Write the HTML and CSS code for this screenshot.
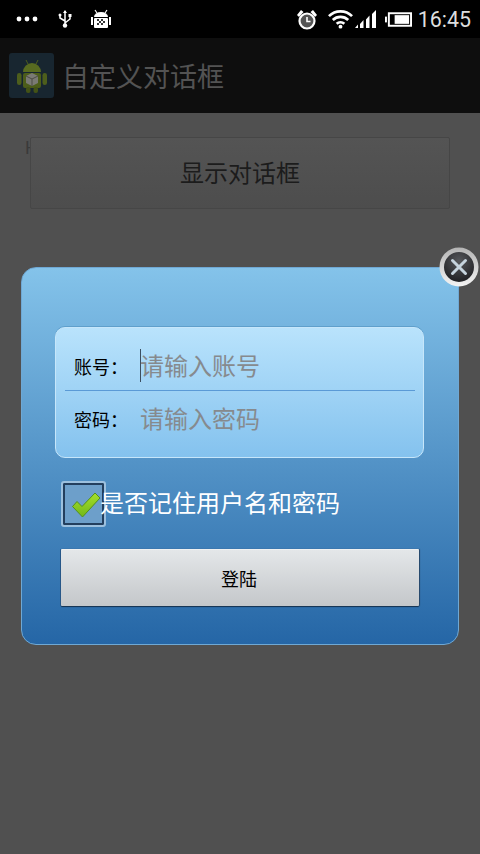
FILE: index.html
```html
<!DOCTYPE html>
<html lang="zh">
<head>
<meta charset="utf-8">
<title>自定义对话框</title>
<link rel="stylesheet" href="styles.css">
</head>
<body>
<div class="screen">
  <header class="status">
    <div class="status-left">
      <svg class="ic-dots" width="22" height="6" viewBox="0 0 22 6"><circle cx="3" cy="3" r="2.4" fill="#fff"/><circle cx="11" cy="3" r="2.4" fill="#fff"/><circle cx="19" cy="3" r="2.4" fill="#fff"/></svg>
      <svg class="ic-usb" width="16" height="18" viewBox="0 0 16 18"><path d="M8 1v15M8 11 3 8V5M8 13l5-4V6" fill="none" stroke="#fff" stroke-width="1.5"/><path d="M8 0l2 3H6z" fill="#fff"/><circle cx="8" cy="15.5" r="2.2" fill="#fff"/><circle cx="3" cy="5" r="1.5" fill="#fff"/><rect x="11.5" y="4" width="3" height="3" fill="#fff"/></svg>
      <svg class="ic-debug" width="20" height="21" viewBox="0 0 20 21"><path d="M4 1l2 3M16 1l-2 3" stroke="#fff" stroke-width="1.2"/><path d="M3 8a7 5 0 0 1 14 0z" fill="#fff"/><rect x="3" y="9" width="14" height="10" rx="1" fill="#fff"/><rect x="0" y="8" width="2" height="8" fill="#fff"/><rect x="18" y="8" width="2" height="8" fill="#fff"/><path d="M6 10h2v2H6zM10 10h2v2h-2zM8 12h2v2H8zM12 12h2v2h-2zM6 14h2v2H6zM10 14h2v2h-2z" fill="#333"/></svg>
    </div>
    <div class="status-right">
      <svg class="ic-alarm" width="22" height="21" viewBox="0 0 22 21"><circle cx="11" cy="12" r="7.500" fill="#555" stroke="#fff" stroke-width="2.200"/><path d="M11 8v4.500h3.500" fill="none" stroke="#fff" stroke-width="1.600"/><path d="M1 6l4-5 2.500 2L3 8zM21 6l-4-5-2.500 2L19 8z" fill="#fff"/></svg>
      <svg class="ic-wifi" width="25" height="20" viewBox="0 0 26 20"><path d="M1 7a17 17 0 0 1 24 0M5 11a11.500 11.500 0 0 1 16 0M9 15a6 6 0 0 1 8 0" fill="none" stroke="#fff" stroke-width="2.800"/><circle cx="13" cy="18" r="2" fill="#fff"/></svg>
      <svg class="ic-signal" width="22" height="18" viewBox="0 0 22 18"><path d="M0 18h3v-3.500L0 18zM5 18h3.500V10L5 14zM11 18h3.500V5.500L11 9.500zM17 18h4V0l-4 4z" fill="#fff"/></svg>
      <svg class="ic-batt" width="27" height="15" viewBox="0 0 28 15"><rect x="0" y="4.500" width="2" height="6" fill="#fff"/><rect x="4" y="1" width="23" height="13" fill="none" stroke="#fff" stroke-width="2"/><rect x="10" y="3" width="15" height="9" fill="#fff"/></svg>
      <span class="clock">16:45</span>
    </div>
  </header>
  <div class="appbar">
    <div class="app-icon">
      <svg width="30" height="36" viewBox="0 0 30 36"><path d="M9 2l2 4M21 2l-2 4" stroke="#4d5e1c" stroke-width="1"/><path d="M6 14a9 9 0 0 1 18 0z" fill="#586b20"/><rect x="6" y="15" width="18" height="15" rx="2" fill="#4c5d1a"/><rect x="0" y="15" width="4.500" height="12" rx="2.200" fill="#4d5e1c"/><rect x="25.500" y="15" width="4.500" height="12" rx="2.200" fill="#4d5e1c"/><rect x="9" y="29" width="4.500" height="6" rx="2" fill="#435216"/><rect x="16.500" y="29" width="4.500" height="6" rx="2" fill="#435216"/><path d="M15 15l6 3v7l-6 3-6-3v-7z" fill="#7a7a74"/><path d="M9 18l6 3 6-3M15 21v7" fill="none" stroke="#4c4c44" stroke-width="1"/></svg>
    </div>
    <h1 class="app-title">自定义对话框</h1>
  </div>
  <main class="content">
    <span class="hint">H</span>
    <button class="show-btn" type="button">显示对话框</button>
  </main>
  <section class="dialog">
    <form class="fields">
      <div class="field field-first">
        <span class="field-label">账号：</span>
        <span class="caret"></span>
        <span class="placeholder">请输入账号</span>
      </div>
      <div class="rule"></div>
      <div class="field field-second">
        <span class="field-label">密码：</span>
        <span class="placeholder">请输入密码</span>
      </div>
    </form>
    <div class="remember">
      <span class="check">
        <svg width="30" height="26" viewBox="0 0 30 26"><defs><linearGradient id="tick" x1="0" y1="0" x2="0" y2="1"><stop offset="0" stop-color="#a6e02c"/><stop offset="1" stop-color="#72b818"/></linearGradient></defs><path d="M1.500 14.500l4.500-5 5 5L24 1l5 5-17.500 19z" fill="url(#tick)" stroke="#55901a" stroke-width="1"/></svg>
      </span>
      <span class="remember-text">是否记住用户名和密码</span>
    </div>
    <button class="login" type="button">登陆</button>
    <span class="close">
      <svg width="40" height="40" viewBox="0 0 40 40"><defs><linearGradient id="ring" x1="0" y1="0" x2="0" y2="1"><stop offset="0" stop-color="#b4b4b4"/><stop offset="1" stop-color="#f4f4f4"/></linearGradient><radialGradient id="ball" cx="0.5" cy="0.3" r="0.75"><stop offset="0" stop-color="#56585c"/><stop offset="1" stop-color="#1d1d20"/></radialGradient></defs><circle cx="20" cy="20" r="19.500" fill="url(#ring)"/><circle cx="20" cy="20" r="15" fill="url(#ball)"/><path d="M13.500 13.500l13 13M26.500 13.500l-13 13" stroke="#c6d4de" stroke-width="3" stroke-linecap="round"/></svg>
    </span>
  </section>
</div>
</body>
</html>
```
FILE: styles.css
```css
* { box-sizing: border-box; }
html, body { margin: 0; padding: 0; }
body { font-family: "Noto Sans CJK SC", "Liberation Sans", sans-serif; background: #505050; }
.screen { position: relative; width: 480px; height: 854px; overflow: hidden; display: flex; flex-direction: column; background: #505050; }

.status { height: 38px; flex: none; background: #000; display: flex; justify-content: space-between; align-items: center; padding: 0 9px 0 16px; }
.status-left { display: flex; align-items: center; }
.ic-dots { margin-right: 19px; }
.ic-usb { margin-right: 18px; }
.status-right { display: flex; align-items: center; }
.ic-alarm { margin-right: 10px; }
.ic-wifi { margin-right: 2px; }
.ic-signal { margin-right: 8px; }
.clock { font-family: Roboto, sans-serif; font-size: 21.400px; color: #dedede; margin-left: 6px; }

.appbar { height: 75px; flex: none; background: #0e0e0e; display: flex; align-items: center; padding-left: 9px; gap: 8px; }
.app-icon { width: 45px; height: 45px; border-radius: 3px; background: #182630; display: flex; align-items: center; justify-content: center; }
.app-title { margin: 0; font-size: 27px; font-weight: 400; color: #535353; line-height: 1; }

.content { flex: 1; position: relative; padding: 24px 30px 0; }
.hint { position: absolute; left: 25px; top: 24px; font-size: 18px; line-height: 22px; color: #3a3a3a; font-family: "Liberation Sans", sans-serif; }
.show-btn { position: relative; display: block; width: 420px; height: 72px; border: 1px solid #464646; border-radius: 2px; background: linear-gradient(#545454, #4d4d4d); color: #1c1c1c; font: 400 24px "Noto Sans CJK SC", sans-serif; padding: 0 0 4px; }

.dialog { position: absolute; left: 21px; top: 267px; width: 438px; height: 378px; border: 1px solid #6fa8d4; border-radius: 15px; background: linear-gradient(#84c3ea, #2566a6); padding: 59px 34px 0 33px; display: flex; flex-direction: column; }
.fields { height: 131px; flex: none; width: 369px; border: 1px solid #c6e6fa; border-radius: 10px; background: linear-gradient(#b9e3fc, #84c2ee); box-shadow: 0 -1px 0 #5f9fcb; padding: 0 8px 0 9px; display: flex; flex-direction: column; }
.field { height: 62px; flex: none; display: flex; align-items: center; padding: 0 0 0 9px; position: relative; }
.field-first { padding-top: 12px; }
.field-second { padding-bottom: 8px; }
.rule { height: 1px; flex: none; background: #5a9ad6; }
.field-label { width: 66px; flex: none; font-size: 18px; color: #000; line-height: 24px; padding-top: 2px; }
.placeholder { font-size: 24px; color: #868a8e; line-height: 32px; }
.caret { position: absolute; left: 75px; top: 21px; width: 1px; height: 33px; background: #3c4f60; }

.remember { display: flex; align-items: center; margin: 22px 0 0 6px; height: 48px; flex: none; }
.check { width: 45px; height: 46px; flex: none; margin-right: -6px; border: 2px solid #9cc0de; border-radius: 3px; background: #6d9fca; box-shadow: inset 0 0 0 2px #233f5e; display: flex; align-items: center; justify-content: center; padding: 2px 0 0 4px; }
.remember-text { font-size: 24px; color: #fff; line-height: 32px; padding-bottom: 4px; }

.login { margin: 21px 0 0 6px; width: 358px; height: 57px; flex: none; border: 0; border-top: 1px solid #eef0f1; border-radius: 1px; background: linear-gradient(#e4e7e9, #c4c7ca); box-shadow: 0 1px 1px #16314e, 1px 0 1px #2a4a6c, -1px 0 0 #2a5d90; color: #000; font: 400 18px "Noto Sans CJK SC", sans-serif; padding: 0 2px 0 0; }

.close { position: absolute; right: -21px; top: -21px; width: 40px; height: 40px; }
.close svg { display: block; }
```
